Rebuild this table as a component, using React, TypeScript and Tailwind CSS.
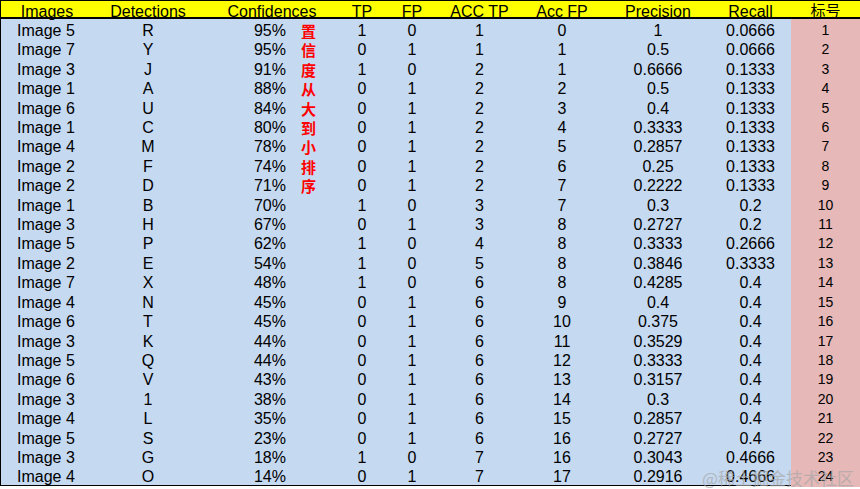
type Row = [string, string, string, number, number, number, number, string, string]

const rows: Row[] = [
  ['Image 5', 'R', '95%', 1, 0, 1, 0, '1', '0.0666'],
  ['Image 7', 'Y', '95%', 0, 1, 1, 1, '0.5', '0.0666'],
  ['Image 3', 'J', '91%', 1, 0, 2, 1, '0.6666', '0.1333'],
  ['Image 1', 'A', '88%', 0, 1, 2, 2, '0.5', '0.1333'],
  ['Image 6', 'U', '84%', 0, 1, 2, 3, '0.4', '0.1333'],
  ['Image 1', 'C', '80%', 0, 1, 2, 4, '0.3333', '0.1333'],
  ['Image 4', 'M', '78%', 0, 1, 2, 5, '0.2857', '0.1333'],
  ['Image 2', 'F', '74%', 0, 1, 2, 6, '0.25', '0.1333'],
  ['Image 2', 'D', '71%', 0, 1, 2, 7, '0.2222', '0.1333'],
  ['Image 1', 'B', '70%', 1, 0, 3, 7, '0.3', '0.2'],
  ['Image 3', 'H', '67%', 0, 1, 3, 8, '0.2727', '0.2'],
  ['Image 5', 'P', '62%', 1, 0, 4, 8, '0.3333', '0.2666'],
  ['Image 2', 'E', '54%', 1, 0, 5, 8, '0.3846', '0.3333'],
  ['Image 7', 'X', '48%', 1, 0, 6, 8, '0.4285', '0.4'],
  ['Image 4', 'N', '45%', 0, 1, 6, 9, '0.4', '0.4'],
  ['Image 6', 'T', '45%', 0, 1, 6, 10, '0.375', '0.4'],
  ['Image 3', 'K', '44%', 0, 1, 6, 11, '0.3529', '0.4'],
  ['Image 5', 'Q', '44%', 0, 1, 6, 12, '0.3333', '0.4'],
  ['Image 6', 'V', '43%', 0, 1, 6, 13, '0.3157', '0.4'],
  ['Image 3', '1', '38%', 0, 1, 6, 14, '0.3', '0.4'],
  ['Image 4', 'L', '35%', 0, 1, 6, 15, '0.2857', '0.4'],
  ['Image 5', 'S', '23%', 0, 1, 6, 16, '0.2727', '0.4'],
  ['Image 3', 'G', '18%', 1, 0, 7, 16, '0.3043', '0.4666'],
  ['Image 4', 'O', '14%', 0, 1, 7, 17, '0.2916', '0.4666'],
]

// red note, one char per row
const note = '置信度从大到小排序'.split('')

const headers = ['Images', 'Detections', 'Confidences', 'TP', 'FP', 'ACC TP', 'Acc FP', 'Precision', 'Recall']

const headCols = 'grid-cols-[92px_110px_138px_42px_58px_77px_88px_104px_81px_69px]'
const bodyCols = 'grid-cols-[92px_110px_87px_51px_42px_58px_77px_88px_104px_81px_69px]'

export default function App() {
  return (
    <div
      className="relative w-[860px] h-[489px] bg-white overflow-hidden text-black"
      style={{ fontFamily: '"Liberation Sans", Arial, "Noto Sans CJK SC", sans-serif' }}
    >
      <div className="border-l border-t border-b border-black">
        <div className={`grid ${headCols} h-[18px] bg-[#ffff00] text-[16px] leading-[18px] border-b-2 border-black`}>
          {headers.map((h) => (
            <div key={h} className="text-center whitespace-nowrap pt-[2px]">
              {h}
            </div>
          ))}
          <div
            className="text-center text-[15px] leading-[17px]"
            style={{ fontFamily: '"Noto Sans CJK SC", sans-serif' }}
          >
            标号
          </div>
        </div>

        {rows.map((r, i) => (
          <div key={i} className={`grid ${bodyCols} h-[19.42px] bg-[#c5d9f1] text-[16px] leading-[19.42px] [&>div]:pt-[2px]`}>
            <div className="pl-[16px]">{r[0]}</div>
            <div className="text-center">{r[1]}</div>
            <div className="text-right pr-[4px]">{r[2]}</div>
            <div
              className="pl-[11px] text-[15px] font-bold text-[#ff0000]"
              style={{ fontFamily: '"Noto Sans CJK SC", sans-serif' }}
            >
              {note[i] ?? ''}
            </div>
            <div className="text-center">{r[3]}</div>
            <div className="text-center">{r[4]}</div>
            <div className="text-center">{r[5]}</div>
            <div className="text-center">{r[6]}</div>
            <div className="text-center">{r[7]}</div>
            <div className="text-center">{r[8]}</div>
            <div className="text-center bg-[#e6b8b7] text-[14px]">{i + 1}</div>
          </div>
        ))}
      </div>

      <div
        className="absolute right-[6px] bottom-[0px] text-[17px] leading-[22px] text-[#a8a8a8] opacity-70 whitespace-nowrap"
        style={{ fontFamily: '"Noto Sans CJK SC", sans-serif' }}
      >
        @稀土掘金技术社区
      </div>
    </div>
  )
}
